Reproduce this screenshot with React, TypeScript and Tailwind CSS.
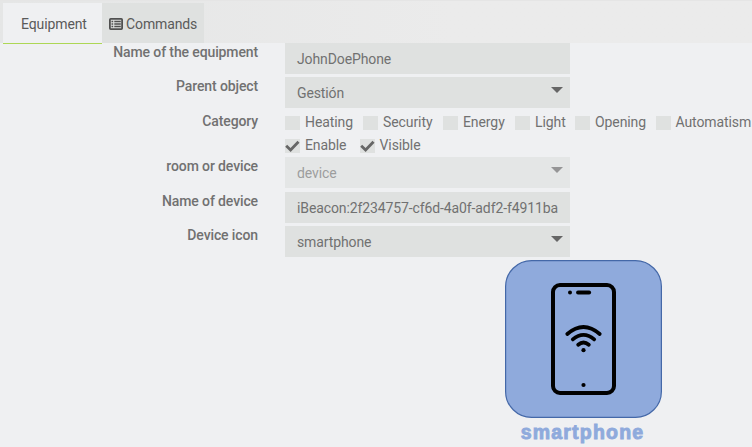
import type { ReactNode } from "react";

function Row({ label, className, children }: { label: string; className: string; children: ReactNode }) {
  return (
    <div className={`flex items-start ${className}`}>
      <div className="w-[258px] shrink-0 text-right text-[14px] leading-[18px] font-medium tracking-[-0.12px] whitespace-nowrap">
        {label}
      </div>
      <div className="ml-[27px] shrink-0">{children}</div>
    </div>
  );
}

function Field({ value, select = false, disabled = false }: { value: string; select?: boolean; disabled?: boolean }) {
  return (
    <div
      className={`flex h-[31px] w-[285px] items-center bg-[#dfe1e0] pr-[7px] pl-3 text-[14px] tracking-[-0.11px] ${disabled ? "opacity-65" : ""}`}
    >
      <span className="flex-1 pt-px leading-[20px] whitespace-nowrap">{value}</span>
      {select && (
        <svg width="12" height="6" viewBox="0 0 12 6" className="mb-[6px] shrink-0" fill="#666">
          <path d="M0 0H12L6 6Z" />
        </svg>
      )}
    </div>
  );
}

function Check({ label, className, checked = false }: { label: string; className: string; checked?: boolean }) {
  return (
    <div className={`flex h-[18px] shrink-0 items-center text-[14px] ${className}`}>
      <span className="mt-[2px] mr-[5px] block h-[14px] w-[15px] shrink-0 bg-[#dfe1e0]">
        {checked && (
          <svg width="15" height="14" viewBox="0 0 15 14" fill="none" stroke="#666" strokeWidth="2.8">
            <path d="M1.2 6.7L5.6 11L13.5 2.8" />
          </svg>
        )}
      </span>
      <span className="leading-[18px] tracking-[-0.09px] whitespace-nowrap">{label}</span>
    </div>
  );
}

export default function App() {
  return (
    <div
      className="h-[447px] w-[752px] overflow-hidden bg-[#eff0f2] text-[#717171]"
      style={{ fontFamily: 'Roboto, "Liberation Sans", sans-serif' }}
    >
      <header className="flex h-[43px] border-t border-[#e5e5e5] bg-linear-to-r from-[#e5e6e6] to-[#ebebeb] to-60% pt-[2px] pl-[3px] text-[14px] tracking-[-0.11px] text-[#5a5a5a]">
        <div className="h-[41px] w-[99px] bg-[#eff0f2]">
          <div className="flex h-10 items-center pt-[2px] pl-[18px]">Equipment</div>
          <div className="h-px bg-[#add755]" />
        </div>
        <div className="flex h-10 w-[102px] items-center bg-[#dfe1e0] pt-[2px] pl-[7px]">
          <svg width="14" height="12" viewBox="0 0 14 12" className="mr-[3px]" fill="none">
            <rect x="0.9" y="0.9" width="12.2" height="10.2" rx="0.8" stroke="#505050" strokeWidth="1.8" />
            <path d="M2.5 3.5H4.2M5.3 3.5H11.8M2.5 6H4.2M5.3 6H11.8M2.5 8.5H4.2M5.3 8.5H11.8" stroke="#505050" strokeWidth="1.3" />
          </svg>
          Commands
        </div>
      </header>

      <main>
        <Row label="Name of the equipment" className="h-[34px]">
          <Field value="JohnDoePhone" />
        </Row>
        <Row label="Parent object" className="h-[35px]">
          <Field value="Gestión" select />
        </Row>
        <div className="flex h-[45px]">
          <div className="w-[258px] shrink-0 text-right text-[14px] leading-[18px] font-medium tracking-[-0.12px]">
            Category
          </div>
          <div className="ml-[27px] shrink-0 pt-px">
            <div className="flex">
              <Check label="Heating" className="w-[78px]" />
              <Check label="Security" className="w-[80px]" />
              <Check label="Energy" className="w-[72px]" />
              <Check label="Light" className="w-[60px]" />
              <Check label="Opening" className="w-[80.5px]" />
              <Check label="Automatism" className="w-[100px]" />
            </div>
            <div className="mt-[5px] flex">
              <Check label="Enable" className="w-[74.5px]" checked />
              <Check label="Visible" className="w-[80px]" checked />
            </div>
          </div>
        </div>
        <Row label="room or device" className="h-[35px]">
          <Field value="device" select disabled />
        </Row>
        <Row label="Name of device" className="h-[34px]">
          <Field value="iBeacon:2f234757-cf6d-4a0f-adf2-f4911ba" />
        </Row>
        <Row label="Device icon" className="h-[34px]">
          <Field value="smartphone" select />
        </Row>
        <div className="ml-[505px] w-[157px]">
          <svg width="157" height="158" viewBox="0 0 157 158" fill="none">
            <rect x="0.6" y="0.6" width="155.8" height="156.8" rx="26" fill="#8faadc" stroke="#4468a8" strokeWidth="1.2" />
            <rect x="48" y="25" width="61" height="108" rx="7" stroke="#000" strokeWidth="4" />
            <g stroke="#000" strokeWidth="3.8" strokeLinecap="round">
              <path d="M73 32.5H84.2" />
              <path d="M62.3 74Q78.5 60 94.7 74" />
              <path d="M67.8 79.4Q78.5 70.4 89.2 79.4" />
              <path d="M73.2 84.8Q78.5 80.2 83.8 84.8" />
            </g>
            <g fill="#000">
              <circle cx="65" cy="32.5" r="2" />
              <circle cx="78.5" cy="90.2" r="2.1" />
              <circle cx="78.5" cy="125" r="2.1" />
            </g>
          </svg>
          <div className="mt-[3px] ml-[14px] w-[127px] text-center font-['Liberation_Sans'] text-[19.5px] leading-[22px] font-bold tracking-[1.2px] text-[#8faadc] [-webkit-text-stroke:0.9px_#8faadc]">
            smartphone
          </div>
        </div>
      </main>
    </div>
  );
}
